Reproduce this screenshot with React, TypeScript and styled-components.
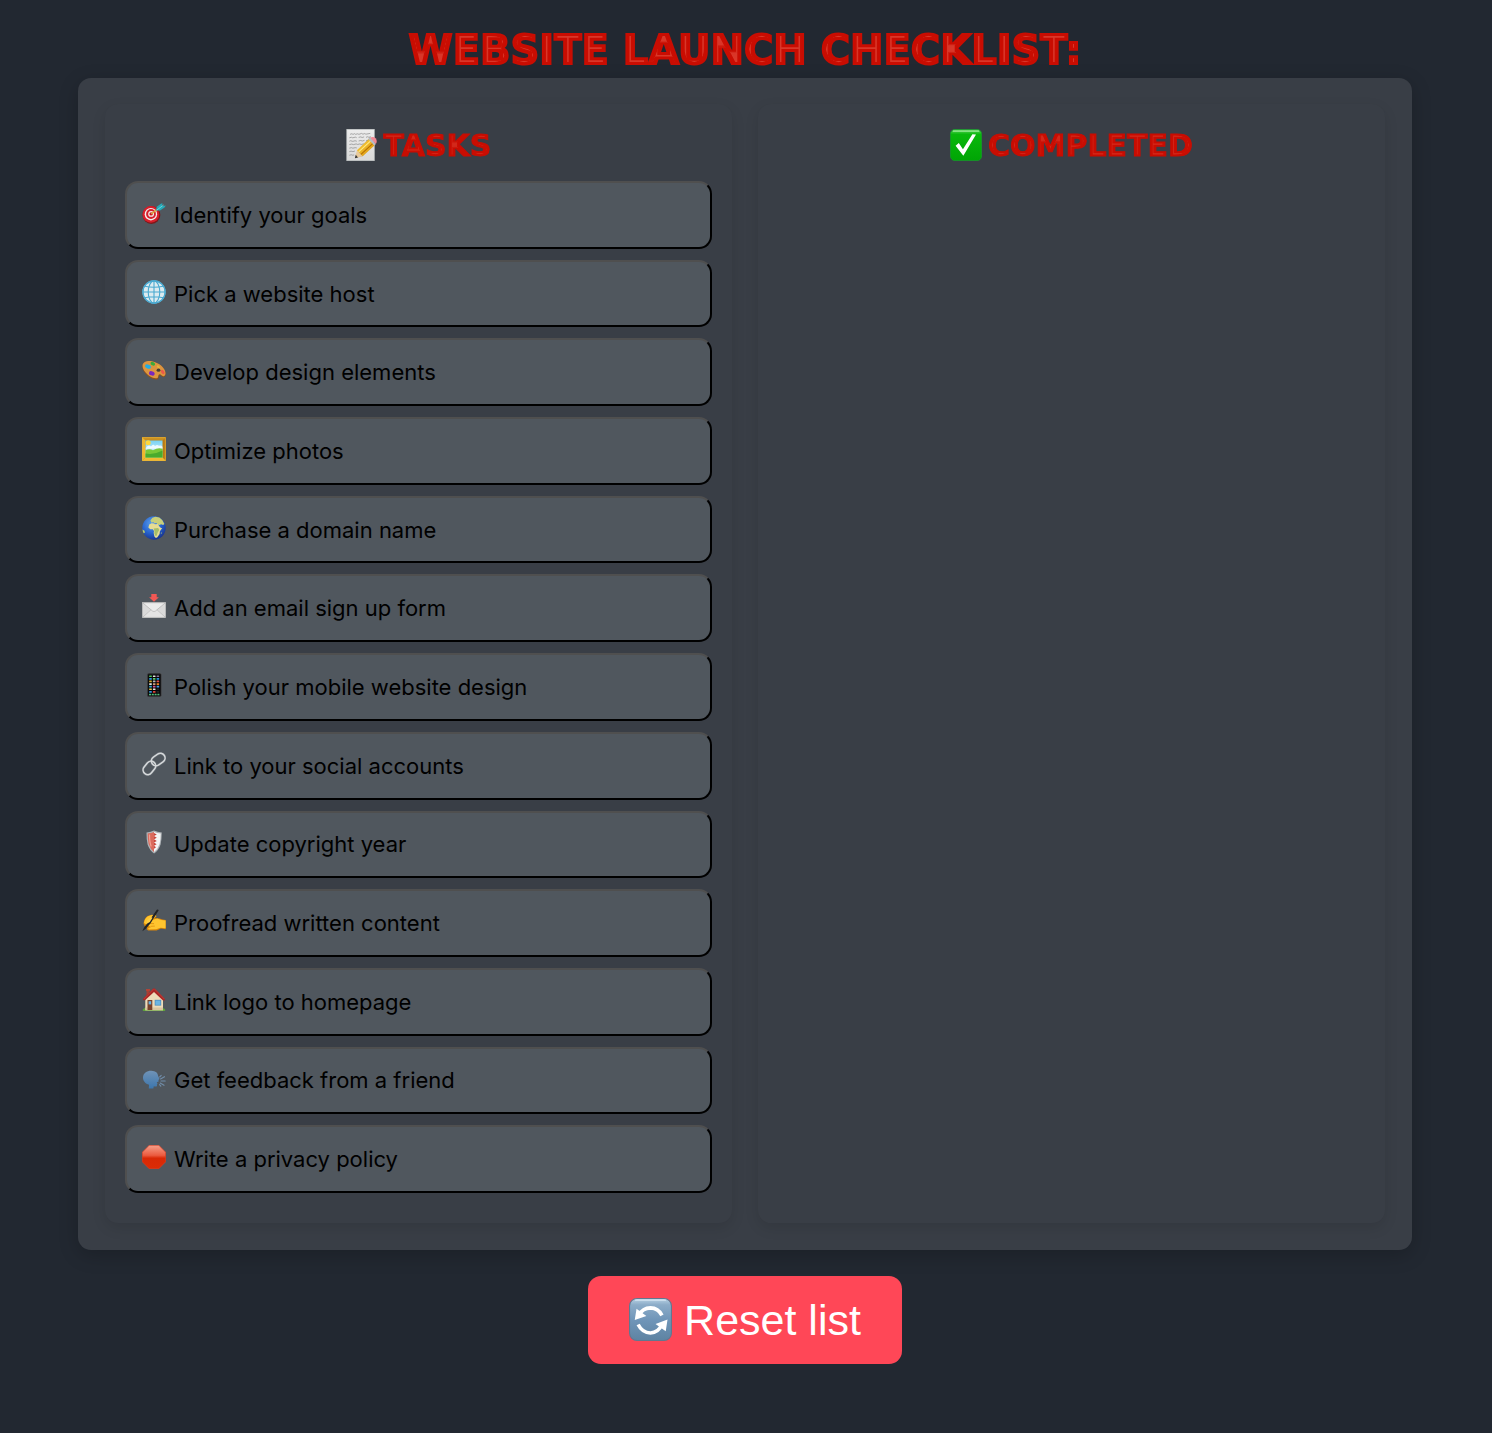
import React, { useState } from 'react';
import styled, { createGlobalStyle, css } from 'styled-components';

const GlobalStyle = createGlobalStyle`
  *, *::before, *::after { box-sizing: border-box; }
  body {
    margin: 0;
    background: #222831;
    font-family: Inter, "Noto Sans", sans-serif;
  }
`;

const Page = styled.main`
  min-height: 100vh;
  padding: 22px 80px 69px 78px;
  display: flex;
  flex-direction: column;
  align-items: stretch;
`;

const display = css`
  margin: 0;
  font-family: "DejaVu Sans", Verdana, sans-serif;
  font-weight: 700;
  color: #c90d02;
  text-transform: uppercase;
`;

const Title = styled.h1`
  ${display}
  font-size: 40px;
  line-height: 56px;
  text-align: center;
  -webkit-text-stroke: 2px #c90d02;
`;

const Inline = styled.span<{ $filter: string }>`
  filter: url(#${(p) => p.$filter});
`;

const FilterDefs = styled.svg`
  position: absolute;
  width: 0;
  height: 0;
`;

const Board = styled.div`
  flex: 1;
  display: grid;
  grid-template-columns: repeat(auto-fit, minmax(320px, 1fr));
  gap: 26px;
  padding: 26px 27px 27px;
  border-radius: 13px;
  background: #393e46;
  box-shadow: 0 5px 20px rgba(0, 0, 0, 0.2);
`;

const Panel = styled.section`
  display: flex;
  flex-direction: column;
  padding: 20px 20px 30px;
  border-radius: 13px;
  background: #393e46;
  box-shadow: 0 5px 14px rgba(0, 0, 0, 0.1);
`;

const PanelTitle = styled.h2`
  ${display}
  display: flex;
  align-items: center;
  justify-content: center;
  gap: 6px;
  margin-bottom: 13px;
  font-size: 30px;
  line-height: 44px;
  -webkit-text-stroke: 1px #c90d02;
`;

const TaskList = styled.ul<{ $rows: number }>`
  flex: 1;
  display: grid;
  grid-template-rows: repeat(${(p) => p.$rows}, minmax(60px, 1fr));
  gap: 11px;
  margin: 0;
  padding: 0;
  list-style: none;
`;

const TaskItem = styled.li`
  display: flex;
`;

const Glyph = styled.svg<{ $size: number }>`
  flex: none;
  width: ${(p) => p.$size}px;
  height: ${(p) => p.$size}px;
  margin-bottom: 2px;
  stroke-width: 0;
`;

const TaskButton = styled.button`
  flex: 1;
  display: flex;
  align-items: center;
  gap: 8px;
  padding: 0 15px;
  border: 2px solid;
  border-color: #4f4f4f #000 #000 #4f4f4f;
  border-radius: 13px;
  background: #50575e;
  color: #000;
  font: 400 22px/32px Inter, "Noto Sans", sans-serif;
  text-align: left;
  cursor: pointer;

  ${Glyph} {
    margin-bottom: 4px;
  }
`;

const ResetButton = styled.button`
  align-self: center;
  display: flex;
  align-items: center;
  gap: 12px;
  margin-top: 26px;
  padding: 20px 41px;
  border: 0;
  border-radius: 13px;
  background: #ff4757;
  color: #fff;
  font: 400 43px/48px "Liberation Sans", Arial, sans-serif;
  cursor: pointer;
`;

function Icon({ size, children }: { size: number; children: React.ReactNode }) {
  return (
    <Glyph $size={size} viewBox="0 0 24 24" aria-hidden="true">
      {children}
    </Glyph>
  );
}

const memo = (
  <>
    <defs>
      <linearGradient id="paper" x1="0" y1="0" x2="0" y2="1"><stop offset="0" stopColor="#ececec" /><stop offset="1" stopColor="#d9d9d9" /></linearGradient>
      <linearGradient id="pencil" x1="0" y1="0" x2="1" y2="1"><stop offset="0" stopColor="#ffd84a" /><stop offset="1" stopColor="#d48a00" /></linearGradient>
    </defs>
    <rect x="0.6" y="0.2" width="20.6" height="23.6" fill="url(#paper)" stroke="#c4c8c8" strokeWidth="0.5" />
    <g fill="none" stroke="#858585" strokeWidth="0.5">
      <path d="M3 4l1.5-.5.7.6 1.2-.6.8.5 1.5-.4 1 .4 2-.7 1 .6 1.4-.5.8.5 3.3-.6" />
      <path d="M2.5 6.6l1.6-.4.9.4 2-.5 1 .4M9.500 6.300l1.600-.4 1 .5 1.500-.5M15 6.300l1-.5 1.200.4 1.400-.4" />
      <path d="M2.500 9.200l1-.4 1.600.5 1.700-.5 1.300.4M9.500 9l1.500-.4 1.200.4 1.700-.5M15 8.900l2-.4" />
      <path d="M2.500 11.700l1.800-.4 1.300.4 2-.5 1.200.4 1.600-.4 1 .4 2-.5" />
      <path d="M2.500 14.400l1.600-.4 1 .4 1.800-.4 1.200.2M2.500 17l1.300-.4 1.400.4 1.500-.5M2.500 19.700l1.400-.4 1.200.4 1-.3" />
    </g>
    <path d="M7 21.800l2-6L18 6l4 4.500-9.500 10z" fill="#000" opacity=".2" />
    <path d="M6.700 21.900l1.500-6L12.500 20.500z" fill="#e8c99a" />
    <path d="M6.700 21.900l.6-2.500 1.700 1.900z" fill="#333" />
    <path d="M8.200 15.900L17 7.700l4.300 4.600-8.800 8.200z" fill="url(#pencil)" />
    <path d="M9.500 17.200l8.800-8.100" stroke="#ffe980" strokeWidth=".9" />
    <path d="M11.200 19.100l8.800-8.100" stroke="#b56f00" strokeWidth=".8" />
    <path d="M17 7.700l1.200-1.100 4.200 4.600-1.100 1.100z" fill="#b9bdc4" />
    <path d="M18.200 6.600c1.300-1.100 3-.7 4 .4s1.200 3 .2 4.200z" fill="#f28a96" />
  </>
);

const check = (
  <>
    <defs><linearGradient id="green" x1="0" y1="0" x2="0" y2="1"><stop offset="0" stopColor="#5ed45e" /><stop offset=".16" stopColor="#09b80b" /><stop offset="1" stopColor="#00a505" /></linearGradient></defs>
    <rect x=".3" y=".3" width="23.4" height="23.4" rx="3.4" fill="url(#green)" stroke="#159a2b" strokeWidth=".6" />
    <path d="M2.5 1.6h19" stroke="#9cea98" strokeWidth=".9" strokeLinecap="round" />
    <path d="M4.2 12.5l2.4-2 3.1 4.6L16.8 4l2.7.1L10 20z" fill="#fff" />
  </>
);

const target = (
  <>
    <circle cx="9.4" cy="14" r="8.9" fill="#7d1719" />
    <circle cx="8.9" cy="13.4" r="8.4" fill="#d71f2b" />
    <circle cx="8.9" cy="13.2" r="6.2" fill="#f4eeee" />
    <circle cx="9" cy="13" r="4.9" fill="#d71f2b" />
    <circle cx="9.1" cy="12.9" r="2.9" fill="#f4eeee" />
    <circle cx="9.1" cy="12.9" r="1.7" fill="#c5121e" />
    <path d="M9.2 12.9L18.5 6" stroke="#d8a53d" strokeWidth="1.5" />
    <path d="M14 9.6l.8-3.8 4.4-3.2 1.4-.2-.7 2.8 3.9-.6-1.3 2-4.5 3z" fill="#26a9b8" />
    <path d="M14.6 9.2l7-5.2" stroke="#79dfe4" strokeWidth=".8" />
  </>
);

const globe = (
  <>
    <circle cx="12" cy="12" r="11.7" fill="#6cbcdc" />
    <circle cx="12" cy="12" r="10.5" fill="#dcebf0" />
    <g fill="none" stroke="#49a9d0" strokeWidth="1.1">
      <circle cx="12" cy="12" r="11.1" />
      <ellipse cx="12" cy="12" rx="5.8" ry="11.1" />
      <path d="M12 .8v22.4M.8 12h22.4M2.7 6.2q9.3 2 18.600 0M2.7 17.800q9.300-2 18.600 0" />
    </g>
  </>
);

const palette = (
  <>
    <path d="M.4 7.8C1 3.3 6 2.6 10.8 3.7 17 5 23.6 10 23.7 15.8c0 1.8-.9 3.3-2.2 3.3-1.8.1-2-2-3.6-1.9-1.7.2-.6 2.4-2 3.7-1.6 1.3-6.3-.1-9.4-2.5C2.5 15.4 0 11.3.4 7.8z" fill="#915119" />
    <path d="M.6 7.100C1.400 3 6.200 2.600 10.800 3.400 17 4.800 23.200 9.600 23.500 15c.1 2-.8 3.200-2.100 3.200-1.800 0-2.200-2-3.800-1.900-1.800.2-.8 2.600-2.100 3.600-1.600 1.100-6-.1-8.800-2.300C2.900 14.600.2 10.600.6 7.100z" fill="#dc9540" />
    <ellipse cx="6" cy="8.600" rx="3" ry="2" fill="#24aee2" transform="rotate(20 6 8.600)" />
    <ellipse cx="10.800" cy="5.800" rx="2.400" ry="1.700" fill="#38ad3a" transform="rotate(25 10.800 5.800)" />
    <ellipse cx="9.800" cy="15.400" rx="2.900" ry="2.100" fill="#7a27bc" transform="rotate(20 9.800 15.400)" />
    <ellipse cx="16.400" cy="8.800" rx="1.800" ry="1.100" fill="#e8b53a" transform="rotate(35 16.400 8.800)" />
    <ellipse cx="20.700" cy="14" rx="2.400" ry="1.400" fill="#ec5a4a" transform="rotate(50 20.700 14)" />
    <ellipse cx="16.500" cy="12.200" rx="1.900" ry="1.600" fill="#463d35" />
  </>
);

const picture = (
  <>
    <defs><linearGradient id="sky" x1="0" y1="0" x2="0" y2="1"><stop offset="0" stopColor="#76d1f4" /><stop offset="1" stopColor="#f2fcff" /></linearGradient></defs>
    <rect width="24" height="24" fill="#b97a13" />
    <path d="M0 0h24l-3.500 3.500h-17z" fill="#c98f20" />
    <path d="M0 0l3.500 3.500v17L0 24z" fill="#efb92e" />
    <path d="M24 24H0l3.500-3.500h17z" fill="#f0bc32" />
    <path d="M.7.7h22.600v22.600H.7z" fill="none" stroke="#e5b23a" strokeWidth=".7" />
    <rect x="3.500" y="3.500" width="17" height="17" fill="url(#sky)" />
    <circle cx="6.200" cy="5.800" r="2.500" fill="#ffd83a" />
    <path d="M5 9.500q2-2 4 0 2-3 4-.5 2-2 4-.2 1.500-1 3.500 1v2h-17z" fill="#fff" opacity=".8" />
    <path d="M3.500 13.200q4-1.800 7.500 0 5-3 9.500-1.500v8.800h-17z" fill="#79c837" />
    <path d="M3.500 16.500q9 1.500 17-3v7h-17z" fill="#49ab2d" />
  </>
);

const africa = (
  <>
    <defs><radialGradient id="ocean" cx=".4" cy=".3" r=".75"><stop offset="0" stopColor="#5ba0ec" /><stop offset=".55" stopColor="#2864ce" /><stop offset="1" stopColor="#17308a" /></radialGradient></defs>
    <circle cx="12" cy="12" r="11.700" fill="url(#ocean)" />
    <path d="M8.400 4.500l2-2.800 3-1 4 .9 3 2.700 2 3.800-1.300 1-2-.8-1.600.8-2-.6-1-1.500-2 .3-1.300-1.200-1.500.6z" fill="#c9cf7a" />
    <path d="M7.200 8.400l2.500-1.200 2.400.3.800.8 3-.2 1.500 2.500 1.600 1.500 1.200-.1-2.300 3.200-.3 2.800-2.200 3.300-1.500.6-1.500-1.500-.7-3.400.3-2-1.200-1.800-2.500.1-1.900-1.700z" fill="#e6dc93" />
    <path d="M11.700 12.600l4.500-.5 1 1.800-1.600 2.800-.9 3-1.200.3-1.200-2.600.2-2.200z" fill="#a5bd6a" />
    <path d="M8.800 4.800l1.200-1 .5 1zM18.700 17.300l1-1.200-.2 2z" fill="#bed379" />
    <path d="M.5 13.500l2 1.200.4 2-1.100.6Q.7 16 .5 13.500z" fill="#bdce67" />
  </>
);

const inbox = (
  <>
    <rect x=".3" y="8.500" width="23.400" height="15" fill="#dadada" stroke="#bdbdbd" strokeWidth=".5" />
    <path d="M.5 23.400l9.300-8.300h4.400l9.300 8.300z" fill="#e4e4e4" stroke="#b5b5b5" strokeWidth=".6" />
    <path d="M.5 8.700h23L13.500 17q-1.500 1.100-3 0z" fill="#ececec" stroke="#b0b0b0" strokeWidth=".7" />
    <path d="M9.300 0h5.400v3.200h2.200L12 7.800 7.100 3.200h2.200z" fill="#f25854" />
  </>
);

const apps = ['#56c45a', '#e3e3e3', '#8d749a', '#2b9be0', '#5ec763', '#2994d7', '#d3ab31', '#b7b7b7', '#dc4e49', '#e6e6e6', '#d39e7a', '#ef801f', '#35a8d2', '#d9548e', '#449ee0', '#e8c948', '#e8e8e8', '#222', '#338fd8', '#db423b', '#222'];
const phone = (
  <>
    <rect x="5.300" y=".2" width="14" height="23.600" rx="1.600" fill="#171719" stroke="#555" strokeWidth=".5" />
    <rect x="6.400" y="2" width="11.800" height="19.600" fill="#050506" />
    {apps.map((color, i) => (
      <rect key={i} x={7.2 + (i % 3) * 3.7} y={2.4 + Math.floor(i / 3) * 2.6} width="2.600" height="1.700" rx=".3" fill={color} />
    ))}
    <path d="M7 21.500h10.600" stroke="#50bd7c" strokeWidth="1.500" strokeDasharray="2 .8" />
  </>
);

const link = (
  <g fill="none">
    <g stroke="#5f666d" strokeWidth="3">
      <rect x="-7.300" y="-4.700" width="14.600" height="9.400" rx="4.700" transform="translate(7.400 15.900) rotate(-52)" />
      <rect x="-7.300" y="-4.700" width="14.600" height="9.400" rx="4.700" transform="translate(16.200 7.500) rotate(-35)" />
    </g>
    <g stroke="#d5d8da" strokeWidth="1.600">
      <rect x="-7.300" y="-4.700" width="14.600" height="9.400" rx="4.700" transform="translate(7.400 15.900) rotate(-52)" />
      <rect x="-7.300" y="-4.700" width="14.600" height="9.400" rx="4.700" transform="translate(16.200 7.500) rotate(-35)" />
    </g>
  </g>
);

const shield = (
  <>
    <path d="M4.500 2.500Q9 2 12 .5q3.500 1.500 7.800 2-.1 7-1.200 12-2 6-6.500 9-4.500-3-6.500-9-1.200-5-1.100-12z" fill="#aeb3b7" />
    <path d="M5.700 3.600Q9.500 3 12 1.900v20q-3.700-3-5.300-8-1-4.500-1-10.300z" fill="#da6a5c" />
    <path d="M12 1.900q3.200 1.200 6.700 1.600 0 6-1.100 10.400-1.600 5-5.600 8z" fill="#f4f4f4" />
    <path d="M12 3l2.800 1.500L12 6l2.800 1.700L12 9.200l2.800 1.700L12 12.500l2.600 1.700-2.600 1.500 2 1.500-2 1.500z" fill="#c9453b" />
    <path d="M7.500 4.500q0 8 1.700 12" fill="none" stroke="#f0a193" strokeWidth="1.200" />
  </>
);

const writing = (
  <>
    <path d="M1.500 14.500q.5-5 4-7.500l4-1.300 4 .3 1.200 1.200-1.700 1.700 4.500.5 3.200 1 3 .5v9.400l-4.800-.7-4.200 1.800-8.500.2-1.500-1.200.3-1.300-1.900-1.100z" fill="#d98608" />
    <path d="M2 14q.5-4.500 4-6.800L9.900 6l3.600.1.300 1.200-3.700 3.600 5.300-1.300 3.700 1.300 4.500.5v7.800l-5.100-.5-4.300 1.500-7.500.2-.6-1.400 2.800-.8z" fill="#ffc52f" />
    <path d="M8 14.500l4 .2M8.500 17.300l4.300-.2" stroke="#dd8d0c" strokeWidth=".8" />
    <path d="M.3 22.300l1.800-3.900 4.600-5.900L14.800.8q1.200-.8 1.900.4L8.600 14.300l-4.800 5.400z" fill="#222426" />
    <path d="M4.800 11.800l3.800-3.900 1.900.8-2.700 4.300-2.500 1.500z" fill="#ffce43" />
  </>
);

const house = (
  <>
    <path d="M.5 22q2-3 5-1.800h13q3.500-1 5 1.800l-1 1H1.500z" fill="#5fa53b" />
    <path d="M4.500 2.200h3v6h-3z" fill="#a44135" />
    <path d="M4 1.200h4v1.500H4z" fill="#c9402f" />
    <path d="M3.300 10.500L12 2.200l9 8.500v11.500H3.300z" fill="#eedbb8" />
    <path d="M3.300 19.500H21v2.700H3.300z" fill="#d9c5a0" />
    <path d="M1.300 12.200l-.2-1.500L11.200.6h1.600L22.900 11l-.2 1.500H21L12 4 3 12.200z" fill="#a92625" />
    <path d="M11.800.8L1.800 11M12.300.8L22.300 11" stroke="#cc453b" strokeWidth=".7" />
    <path d="M5.500 12h4.800v10H5.500z" fill="#79412a" />
    <path d="M6.600 13.200h2.600v3.200H6.600z" fill="#64b4e3" />
    <path d="M12.700 11.800h6.500v5.800h-6.500z" fill="#4f8fc0" />
    <path d="M13.500 12.600h4.900v4.200h-4.900z" fill="#6bb5e3" />
  </>
);

const speaking = (
  <>
    <defs><linearGradient id="head" x1="0" y1="0" x2="0" y2="1"><stop offset="0" stopColor="#7093b7" /><stop offset="1" stopColor="#3c76ad" /></linearGradient></defs>
    <g transform="translate(0 1)">
      <path d="M1 10.500C1.200 6 5 3.700 9.300 3.800c4.400.1 6.600 2.300 6.800 5.200l1.500 3-1.200.9.300 1.500-2 .8.900 1.500-.7.800.1 1.500q-.8 1-3.200.3l-.5 2.200H6.800l.2-3.700C3.500 16.800.9 14 1 10.500z" fill="url(#head)" />
      <g stroke="#718da9" strokeWidth="1.100" strokeLinecap="round"><path d="M18.500 12l4-2.300M19 14h4.200M18.200 16l3.800 2.300M17.700 10l1.500-1.600M17.600 17.700l1.200 1.500" /></g>
    </g>
  </>
);

const stop = (
  <>
    <defs><linearGradient id="sign" x1="0" y1="0" x2="0" y2="1"><stop offset="0" stopColor="#f5a08b" /><stop offset=".43" stopColor="#eb5b3f" /><stop offset=".55" stopColor="#d82906" /><stop offset="1" stopColor="#dc2b05" /></linearGradient></defs>
    <path d="M7.200.3h9.600l6.900 6.900v9.600l-6.900 6.900H7.200L.3 16.800V7.200z" fill="url(#sign)" stroke="#e73b1c" strokeWidth=".6" />
  </>
);

const refresh = (
  <>
    <defs><linearGradient id="steel" x1="0" y1="0" x2="0" y2="1"><stop offset="0" stopColor="#b9d2e5" /><stop offset=".15" stopColor="#8cacc8" /><stop offset=".5" stopColor="#7096b9" /><stop offset="1" stopColor="#5e83a2" /></linearGradient></defs>
    <rect x=".3" y=".3" width="23.400" height="23.400" rx="4.200" fill="url(#steel)" stroke="#61788f" strokeWidth=".6" />
    <path d="M3.700 1.200h16.600" stroke="#d5e5f1" strokeWidth=".7" strokeLinecap="round" />
    <path d="M5.600 9.500Q7.600 5.600 12 5.500q4.300 0 6.400 4.200M18.400 14.800q-2.100 4.600-6.400 4.700-4.600-.1-6.900-4.700" fill="none" stroke="#fff" strokeWidth="2" />
    <path d="M4.200 6l-1 6.300 6.500-2.200zM20.500 18.500l1-6.500-6.700 2.500z" fill="#fff" />
  </>
);

interface Task {
  id: string;
  label: string;
  icon: React.ReactNode;
}

const TASKS: Task[] = [
  { id: 'goals', label: 'Identify your goals', icon: target },
  { id: 'host', label: 'Pick a website host', icon: globe },
  { id: 'design', label: 'Develop design elements', icon: palette },
  { id: 'photos', label: 'Optimize photos', icon: picture },
  { id: 'domain', label: 'Purchase a domain name', icon: africa },
  { id: 'email', label: 'Add an email sign up form', icon: inbox },
  { id: 'mobile', label: 'Polish your mobile website design', icon: phone },
  { id: 'social', label: 'Link to your social accounts', icon: link },
  { id: 'copyright', label: 'Update copyright year', icon: shield },
  { id: 'proofread', label: 'Proofread written content', icon: writing },
  { id: 'logo', label: 'Link logo to homepage', icon: house },
  { id: 'feedback', label: 'Get feedback from a friend', icon: speaking },
  { id: 'privacy', label: 'Write a privacy policy', icon: stop },
];

// Lightens the core of each letter stroke, like an inline display face.
function InlineFilters() {
  return (
    <FilterDefs aria-hidden="true">
      {[
        { id: 'inline-large', radius: '4 3', opacity: 0.45 },
        { id: 'inline-small', radius: '3 2', opacity: 0.3 },
      ].map(({ id, radius, opacity }) => (
        <filter key={id} id={id} colorInterpolationFilters="sRGB">
          <feMorphology in="SourceAlpha" operator="erode" radius={radius} result="core" />
          <feFlood floodColor="#ee6a58" floodOpacity={opacity} />
          <feComposite in2="core" operator="in" result="line" />
          <feMerge>
            <feMergeNode in="SourceGraphic" />
            <feMergeNode in="line" />
          </feMerge>
        </filter>
      ))}
    </FilterDefs>
  );
}

interface ColumnProps {
  title: string;
  icon: React.ReactNode;
  tasks: Task[];
  onPick: (id: string) => void;
}

function Column({ title, icon, tasks, onPick }: ColumnProps) {
  return (
    <Panel>
      <PanelTitle>
        <Icon size={32}>{icon}</Icon>
        <Inline $filter="inline-small">{title}</Inline>
      </PanelTitle>
      <TaskList $rows={TASKS.length}>
        {tasks.map((task) => (
          <TaskItem key={task.id}>
            <TaskButton type="button" onClick={() => onPick(task.id)}>
              <Icon size={24}>{task.icon}</Icon>
              {task.label}
            </TaskButton>
          </TaskItem>
        ))}
      </TaskList>
    </Panel>
  );
}

export default function App() {
  const [done, setDone] = useState<string[]>([]);
  const toggle = (id: string) =>
    setDone((ids) => (ids.includes(id) ? ids.filter((x) => x !== id) : [...ids, id]));

  return (
    <>
      <GlobalStyle />
      <InlineFilters />
      <Page>
        <Title>
          <Inline $filter="inline-large">Website Launch Checklist:</Inline>
        </Title>
        <Board>
          <Column title="Tasks" icon={memo} tasks={TASKS.filter((t) => !done.includes(t.id))} onPick={toggle} />
          <Column title="Completed" icon={check} tasks={TASKS.filter((t) => done.includes(t.id))} onPick={toggle} />
        </Board>
        <ResetButton type="button" onClick={() => setDone([])}>
          <Icon size={43}>{refresh}</Icon>
          Reset list
        </ResetButton>
      </Page>
    </>
  );
}
